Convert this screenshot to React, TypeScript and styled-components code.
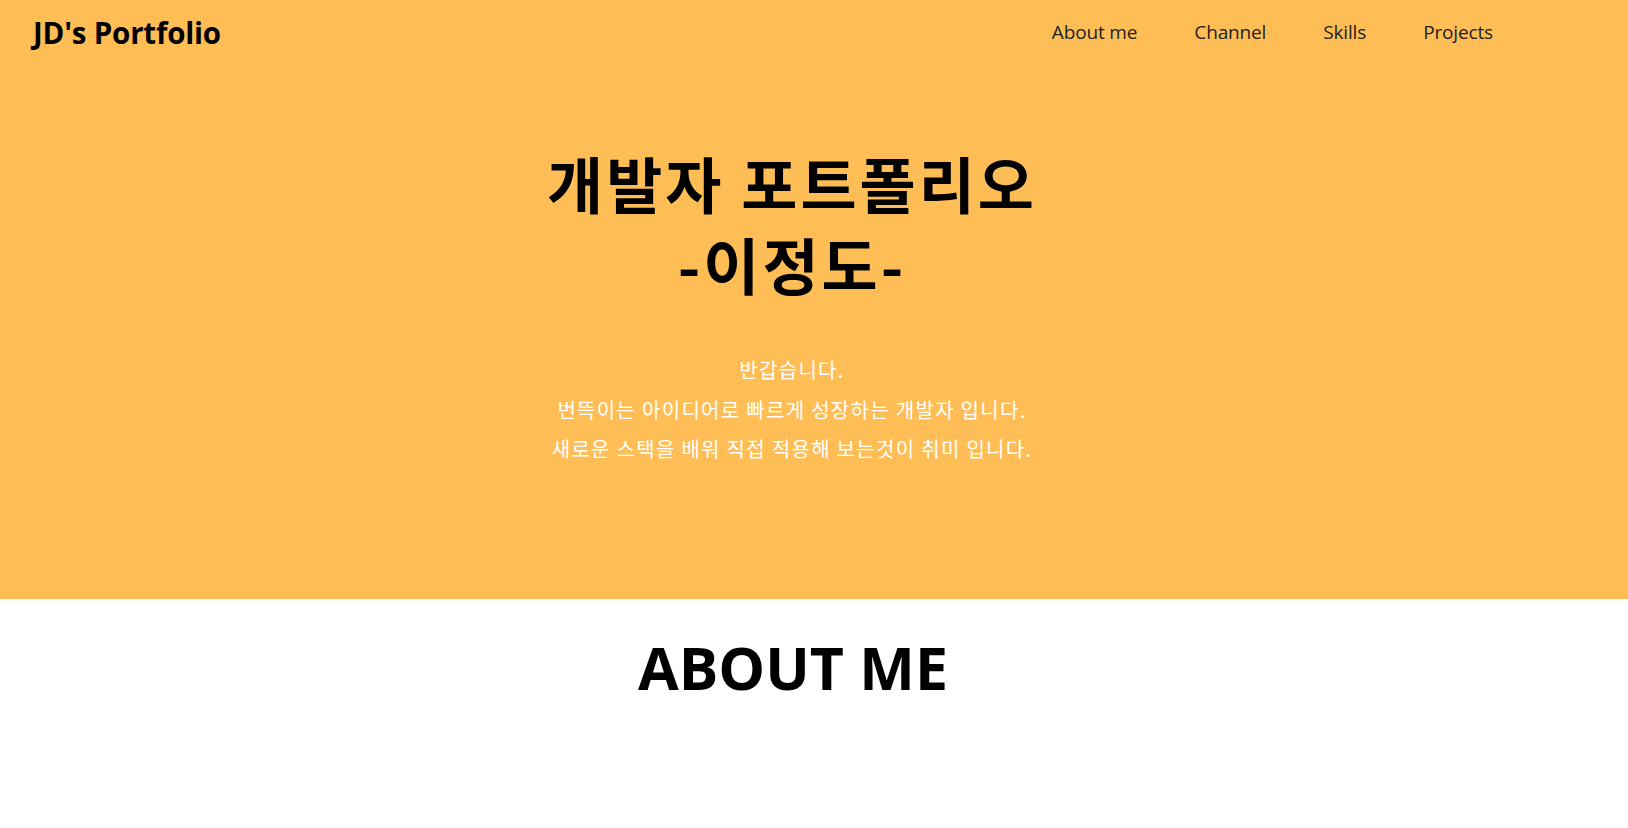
import React from "react";
import styled, { createGlobalStyle } from "styled-components";

const GlobalStyle = createGlobalStyle`
  * { box-sizing: border-box; }
  body {
    margin: 0;
    font-family: "Open Sans", "Noto Sans CJK KR", sans-serif;
    background: #ffffff;
    color: #000;
  }
`;

const Page = styled.div`
  display: flex;
  flex-direction: column;
`;

const Hero = styled.section`
  background: #ffbe55;
  height: 599px;
  display: flex;
  flex-direction: column;
`;

const Header = styled.header`
  height: 64px;
  display: flex;
  align-items: center;
  justify-content: space-between;
  padding: 0 135px 0 33px;
`;

const Logo = styled.a`
  font-family: "Open Sans", "Noto Sans CJK KR", sans-serif;
  font-size: 29.5px;
  font-weight: 700;
  color: #000;
  text-decoration: none;
  letter-spacing: -0.2px;
`;

const Nav = styled.nav`
  display: flex;
  gap: 57px;
`;

const NavLink = styled.a`
  font-family: "Open Sans", sans-serif;
  font-size: 19px;
  font-weight: 400;
  color: #222;
  text-decoration: none;
  letter-spacing: -0.15px;
`;

const HeroBody = styled.div`
  display: flex;
  flex-direction: column;
  align-items: center;
  padding: 78px 44px 0 0;
`;

const Title = styled.h1`
  margin: 0;
  font-family: "Noto Sans CJK KR", sans-serif;
  font-size: 61px;
  font-weight: 700;
  line-height: 81px;
  letter-spacing: 3px;
  text-align: center;
  color: #000;
`;

const Intro = styled.div`
  margin-top: 46px;
  display: flex;
  flex-direction: column;
  align-items: center;
`;

const IntroLine = styled.p`
  margin: 0;
  font-family: "Noto Sans CJK KR", sans-serif;
  font-size: 20px;
  line-height: 39.5px;
  letter-spacing: 1.3px;
  color: #ffffff;
  text-align: center;
`;

const Section = styled.section`
  display: flex;
  flex-direction: column;
  align-items: center;
  padding: 28px 42px 0 0;
`;

const SectionTitle = styled.h2`
  margin: 0;
  font-family: "Open Sans", sans-serif;
  font-size: 59px;
  font-weight: 700;
  color: #000;
`;

export default function App() {
  return (
    <Page>
      <GlobalStyle />
      <Hero>
        <Header>
          <Logo href="#">JD's Portfolio</Logo>
          <Nav>
            <NavLink href="#">About me</NavLink>
            <NavLink href="#">Channel</NavLink>
            <NavLink href="#">Skills</NavLink>
            <NavLink href="#">Projects</NavLink>
          </Nav>
        </Header>
        <HeroBody>
          <Title>
            개발자 포트폴리오
            <br />
            -이정도-
          </Title>
          <Intro>
            <IntroLine>반갑습니다.</IntroLine>
            <IntroLine>번뜩이는 아이디어로 빠르게 성장하는 개발자 입니다.</IntroLine>
            <IntroLine>새로운 스택을 배워 직접 적용해 보는것이 취미 입니다.</IntroLine>
          </Intro>
        </HeroBody>
      </Hero>
      <Section>
        <SectionTitle>ABOUT ME</SectionTitle>
      </Section>
    </Page>
  );
}
